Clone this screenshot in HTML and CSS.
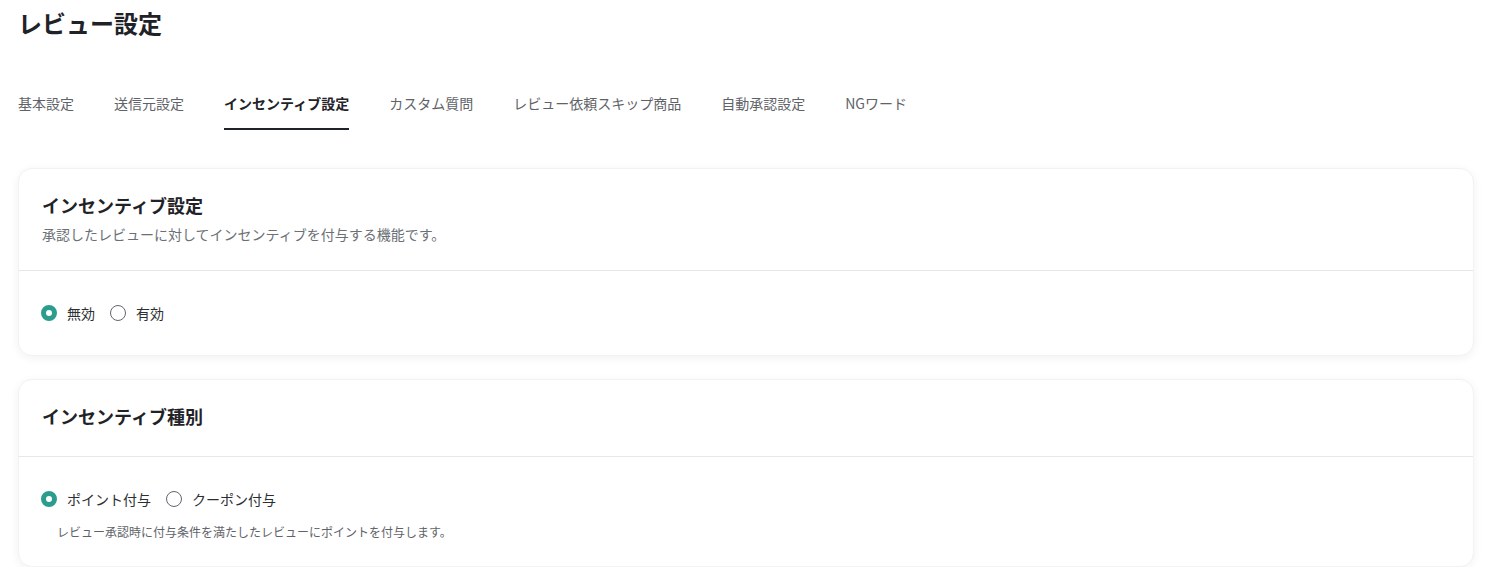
FILE: index.html
```html
<!DOCTYPE html>
<html lang="ja">
<head>
<meta charset="utf-8">
<title>レビュー設定</title>
<link rel="stylesheet" href="styles.css">
</head>
<body>
<div class="page">
  <h1 class="page-title">レビュー設定</h1>
  <nav class="tabs">
    <a class="tab">基本設定</a>
    <a class="tab">送信元設定</a>
    <a class="tab active">インセンティブ設定</a>
    <a class="tab">カスタム質問</a>
    <a class="tab">レビュー依頼スキップ商品</a>
    <a class="tab">自動承認設定</a>
    <a class="tab">NGワード</a>
  </nav>

  <section class="card">
    <div class="card-head">
      <h2 class="card-title">インセンティブ設定</h2>
      <p class="card-desc">承認したレビューに対してインセンティブを付与する機能です。</p>
    </div>
    <div class="card-body">
      <div class="radios">
        <label class="radio"><span class="dot checked"></span><span>無効</span></label>
        <label class="radio"><span class="dot"></span><span>有効</span></label>
      </div>
    </div>
  </section>

  <section class="card">
    <div class="card-head">
      <h2 class="card-title">インセンティブ種別</h2>
    </div>
    <div class="card-body">
      <div class="radios">
        <label class="radio"><span class="dot checked"></span><span>ポイント付与</span></label>
        <label class="radio"><span class="dot"></span><span>クーポン付与</span></label>
      </div>
      <p class="help">レビュー承認時に付与条件を満たしたレビューにポイントを付与します。</p>
    </div>
  </section>
</div>
</body>
</html>
```

FILE: styles.css
```css
html, body {
  margin: 0;
  padding: 0;
  background: #ffffff;
}
body {
  font-family: "Noto Sans CJK JP", "Noto Sans", sans-serif;
  color: #1f2328;
}
.page {
  padding: 0 29px 0 18px;
}
.page-title {
  margin: 0;
  font-size: 24px;
  font-weight: 700;
  line-height: 46px;
  color: #1f2328;
}
.tabs {
  display: flex;
  gap: 40px;
  margin-top: 35px;
  height: 52px;
}
.tab {
  font-size: 14px;
  line-height: 20px;
  padding-top: 12px;
  color: #5f6368;
  height: 35px;
  box-sizing: content-box;
  border-bottom: 2px solid transparent;
  cursor: pointer;
}
.tab.active {
  color: #1f2328;
  font-weight: 700;
  border-bottom-color: #1f2328;
}
.card {
  margin-top: 35px;
  background: #fff;
  border-radius: 14px;
  border: 1px solid #f1f2f4;
  box-shadow: 0 2px 10px rgba(20, 30, 50, 0.06);
}
.card + .card {
  margin-top: 23px;
}
.card-head {
  padding: 22px 23px 26px;
  border-bottom: 1px solid #e6e7ea;
}
.card-title {
  margin: 0;
  font-size: 18px;
  font-weight: 700;
  line-height: 28px;
  color: #1f2328;
}
.card-desc {
  margin: 5px 0 0;
  font-size: 14px;
  line-height: 20px;
  color: #6b7075;
}
.card-body {
  padding: 24px 23px 24px 22px;
}
.radios {
  display: flex;
  align-items: center;
  gap: 15px;
  height: 36px;
}
.radio {
  display: flex;
  align-items: center;
  gap: 10px;
  font-size: 14px;
  color: #2b2f33;
}
.dot {
  box-sizing: border-box;
  width: 16px;
  height: 16px;
  border-radius: 50%;
  border: 1.5px solid #5f6670;
  background: #fff;
}
.dot.checked {
  border: 5px solid #2a9d8f;
}
.help {
  margin: 5px 0 0 16px;
  font-size: 12px;
  line-height: 20px;
  color: #5f6368;
}
```
